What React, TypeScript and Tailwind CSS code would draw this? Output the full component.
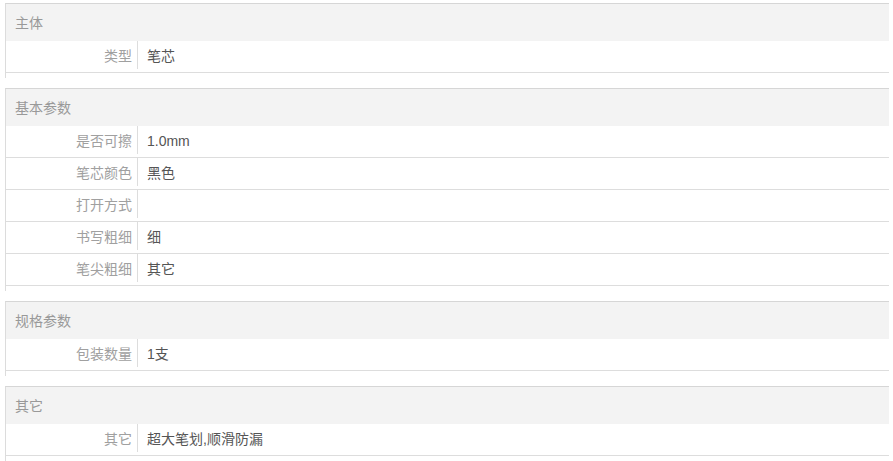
import React from "react";

type Section = { title: string; rows: [string, string][] };

const sections: Section[] = [
  { title: "主体", rows: [["类型", "笔芯"]] },
  {
    title: "基本参数",
    rows: [
      ["是否可擦", "1.0mm"],
      ["笔芯颜色", "黑色"],
      ["打开方式", ""],
      ["书写粗细", "细"],
      ["笔尖粗细", "其它"],
    ],
  },
  { title: "规格参数", rows: [["包装数量", "1支"]] },
  { title: "其它", rows: [["其它", "超大笔划,顺滑防漏"]] },
];

export default function App() {
  return (
    <div
      className="w-[893px] h-[461px] bg-white overflow-hidden pt-[3px] text-[14px]"
      style={{ fontFamily: '"Liberation Sans", "Noto Sans CJK SC", sans-serif' }}
    >
      {sections.map((s) => (
        <div
          key={s.title}
          className="ml-[5px] mr-[4px] border-l border-t border-l-[#dcdcdc] border-t-[#d6d6d6] pb-[5px] mb-[10px]"
        >
          <div className="h-[37px] bg-[#f3f3f3] pl-[9px] leading-[38px] text-[#999999]">
            {s.title}
          </div>
          {s.rows.map(([k, v]) => (
            <div key={k} className="flex items-start h-[32px] border-b border-[#dddddd]">
              <div className="w-[131px] shrink-0 text-right pr-[5px] leading-[30px] text-[#a0a0a0]">
                {k}
              </div>
              <div className="flex-1 h-[28px] border-l border-[#dddddd] pl-[9px] leading-[30px] text-[#555555]">
                {v}
              </div>
            </div>
          ))}
        </div>
      ))}
    </div>
  );
}
